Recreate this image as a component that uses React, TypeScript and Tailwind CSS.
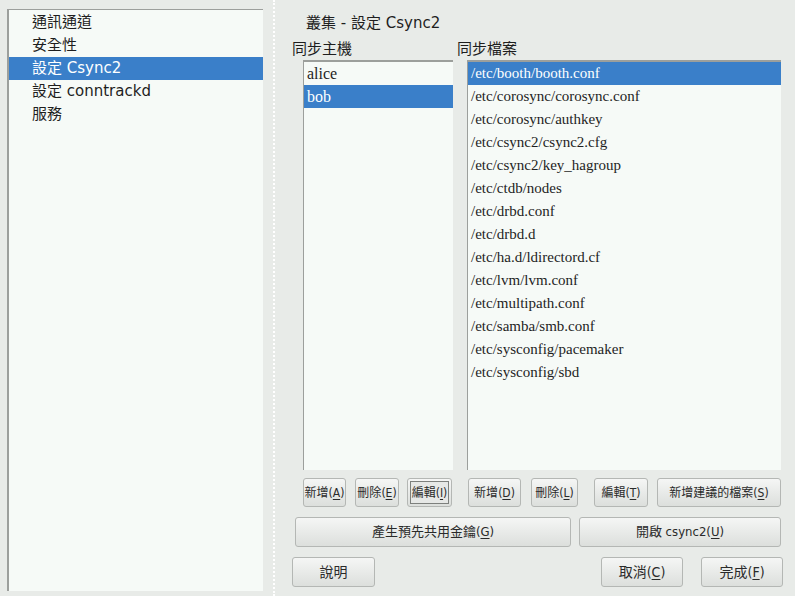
import React from "react";

const sans = { fontFamily: '"DejaVu Sans", "Noto Sans CJK TC", sans-serif' };
const btnFont = {
    fontFamily: '"DejaVu Sans Condensed", "Liberation Sans Narrow", "Liberation Sans", "Noto Sans CJK TC", sans-serif',
};
const serif = { fontFamily: '"Liberation Serif", "Noto Sans CJK TC", serif' };

const navItems = [
    { label: "通訊通道", active: false },
    { label: "安全性", active: false },
    { label: "設定 Csync2", active: true },
    { label: "設定 conntrackd", active: false },
    { label: "服務", active: false },
];

const files = [
    "/etc/booth/booth.conf",
    "/etc/corosync/corosync.conf",
    "/etc/corosync/authkey",
    "/etc/csync2/csync2.cfg",
    "/etc/csync2/key_hagroup",
    "/etc/ctdb/nodes",
    "/etc/drbd.conf",
    "/etc/drbd.d",
    "/etc/ha.d/ldirectord.cf",
    "/etc/lvm/lvm.conf",
    "/etc/multipath.conf",
    "/etc/samba/smb.conf",
    "/etc/sysconfig/pacemaker",
    "/etc/sysconfig/sbd",
];

type BtnProps = {
    text: string;
    mnemonic?: string;
    className: string;
    focused?: boolean;
};

const Btn: React.FC<BtnProps> = ({ text, mnemonic, className, focused }) => (
    <div
        className={`flex items-center justify-center overflow-hidden whitespace-nowrap rounded-[3px] border border-[#b4b7b4] bg-gradient-to-b from-[#f5f6f5] to-[#dcdfdc] text-[#2a2a2a] ${className}`}
        style={btnFont}
    >
        <span
            className={`flex items-center justify-center ${
                focused ? "h-[23px] w-[39px] border border-[#7d807d] bg-[#e6e8e6]" : ""
            }`}
        >
            {text}
            {mnemonic && (
                <>
                    (<span className="underline underline-offset-2">{mnemonic}</span>)
                </>
            )}
        </span>
    </div>
);

export default function App() {
    return (
        <div className="flex h-[596px] w-[795px] overflow-hidden bg-[#e8ebe8] text-[#1e1e1e]" style={sans}>
            {/* left navigation tree */}
            <div className="ml-[7px] mt-[9px] h-[582px] w-[256px] border-l-2 border-t border-[#9c9f9c] bg-[#f6faf7] pt-[1px]">
                {navItems.map((item, i) => (
                    <div
                        key={i}
                        className={`flex h-[23px] items-center pl-[23px] text-[15px] ${
                            item.active ? "bg-[#3a7fc9] text-white" : ""
                        }`}
                    >
                        {item.label}
                    </div>
                ))}
            </div>

            {/* splitter */}
            <div className="ml-[10px] h-full w-[3px] border-l-2 border-dotted border-white" />

            {/* right pane */}
            <div className="flex flex-1 flex-col">
                <div className="ml-[30px] mt-[13px] h-[20px] text-[15px] leading-[20px]">叢集 - 設定 Csync2</div>

                <div className="ml-[16px] mt-[6px] flex">
                    <div className="flex w-[161px] flex-col">
                        <div className="h-[20px] text-[15px] leading-[20px]">同步主機</div>
                        <div
                            className="ml-[11px] mt-[1px] h-[410px] w-[150px] border-l border-t-2 border-[#9c9f9c] bg-[#f6faf7] text-[16px]"
                            style={serif}
                        >
                            <div className="flex h-[23px] items-center pl-[3px]">alice</div>
                            <div className="flex h-[23px] items-center bg-[#3a7fc9] pl-[3px] text-white">bob</div>
                        </div>
                    </div>
                    <div className="ml-[4px] flex w-[324px] flex-col">
                        <div className="h-[20px] text-[15px] leading-[20px]">同步檔案</div>
                        <div
                            className="ml-[10px] mt-[1px] h-[410px] w-[314px] border-l border-t-2 border-[#9c9f9c] bg-[#f6faf7] text-[15px]"
                            style={serif}
                        >
                            {files.map((f, i) => (
                                <div
                                    key={f}
                                    className={`flex h-[23px] items-center pl-[3px] ${
                                        i === 0 ? "bg-[#3a7fc9] text-white" : ""
                                    }`}
                                >
                                    {f}
                                </div>
                            ))}
                        </div>
                    </div>
                </div>

                <div className="ml-[27px] mt-[8px] flex h-[29px] text-[12px]">
                    <Btn text="新增" mnemonic="A" className="w-[43px]" />
                    <Btn text="刪除" mnemonic="E" className="ml-[9px] w-[44px]" />
                    <Btn text="編輯" mnemonic="I" className="ml-[8px] w-[45px]" focused />
                    <Btn text="新增" mnemonic="D" className="ml-[16px] w-[53px]" />
                    <Btn text="刪除" mnemonic="L" className="ml-[10px] w-[47px]" />
                    <Btn text="編輯" mnemonic="T" className="ml-[16px] w-[54px]" />
                    <Btn text="新增建議的檔案" mnemonic="S" className="ml-[9px] w-[124px]" />
                </div>

                <div className="ml-[19px] mt-[10px] flex h-[30px] text-[13px]">
                    <Btn text="產生預先共用金鑰" mnemonic="G" className="w-[276px]" />
                    <Btn text="開啟 csync2" mnemonic="U" className="ml-[8px] w-[202px]" />
                </div>

                <div className="ml-[16px] mt-[10px] flex h-[30px] text-[14px]">
                    <Btn text="說明" className="w-[83px]" />
                    <Btn text="取消" mnemonic="C" className="ml-[226px] w-[82px]" />
                    <Btn text="完成" mnemonic="F" className="ml-[18px] w-[82px]" />
                </div>
            </div>
        </div>
    );
}
